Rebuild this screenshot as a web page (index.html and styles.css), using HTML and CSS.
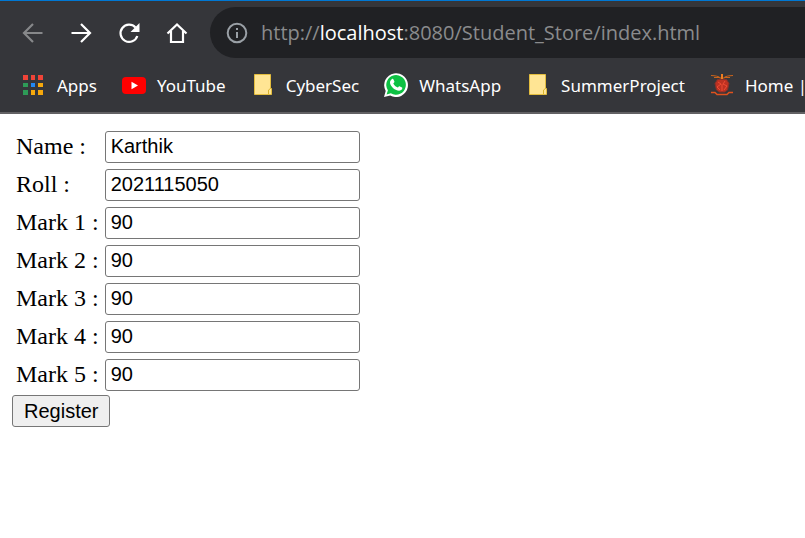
FILE: index.html
```html
<!DOCTYPE html>
<html lang="en">
<head>
<meta charset="utf-8">
<title>Student Store</title>
<link rel="stylesheet" href="styles.css">
</head>
<body>
<header class="browser">
  <div class="toolbar">
    <nav class="controls" aria-label="Navigation">
      <button class="tool dim" type="button" aria-label="Back"><svg viewBox="0 0 24 24"><path d="M21.5 12H4M12 3l-9 9 9 9"/></svg></button>
      <button class="tool" type="button" aria-label="Forward"><svg viewBox="0 0 24 24"><path d="M2.5 12H20M12 3l9 9-9 9"/></svg></button>
      <button class="tool" type="button" aria-label="Reload"><svg viewBox="0 0 24 24"><path d="M18.500 6.500A8.600 8.600 0 1 0 20.300 15"/><path class="solid" d="M22.500 2v9h-9z"/></svg></button>
      <button class="tool" type="button" aria-label="Home"><svg viewBox="0 0 24 24"><path d="M2.500 12.500L12 3.500l9.500 9M6 10v11h12V10"/></svg></button>
    </nav>
    <div class="address">
      <svg class="info" viewBox="0 0 22 22"><circle cx="11" cy="11" r="9.300"/><path d="M11 10v6M11 6v2"/></svg>
      <span class="url">http://<span class="host">localhost</span>:8080/Student_Store/index.html</span>
    </div>
  </div>
  <nav class="bookmarks" aria-label="Bookmarks">
    <a class="bookmark" href="#"><svg viewBox="0 0 24 24"><path fill="#f04438" d="M1 2h5v5H1zM9 2h4v5H9zM16 2h5v5h-5z"/><path fill="#2e9b57" d="M1 10h5v4H1zM1 17h5v5H1z"/><path fill="#2188f3" d="M9 10h4v4H9z"/><path fill="#f5a80c" d="M16 10h5v4h-5zM9 17h4v5H9zM16 17h5v5h-5z"/></svg>Apps</a>
    <a class="bookmark" href="#"><svg viewBox="0 0 24 24"><rect y="4" width="24" height="17" rx="4" fill="#f00"/><path fill="#fff" d="M9.500 8.800l6.500 3.700-6.500 3.700z"/></svg>YouTube</a>
    <a class="bookmark" href="#"><svg viewBox="0 0 24 24"><path fill="#ffe594" stroke="#e3bd3e" d="M3.500 1.500h16v14h1v6h-17z"/><path fill="none" stroke="#d9b32f" d="M17.500 21v-4l2-1.500"/></svg>CyberSec</a>
    <a class="bookmark" href="#"><svg viewBox="0 0 24 24"><path fill="#fff" d="M0 24l1.700-6A11.900 11.900 0 1 1 6.200 22.500z"/><path fill="#0dc143" d="M2.600 21.500l1.300-4.200a9.800 9.800 0 1 1 3 2.900z"/><path fill="#fff" d="M7.700 6.200c.7-.6 1.500-.4 1.800.3l.9 2.100c.2.500-.1 1-1.100 2 1 2 2.300 3.100 4.500 4 .7-.8 1.100-1.600 1.700-1.400l2.500 1.200c.5.300.3 1.500-.2 2.200-1.200 1.500-3.500 1.500-6.100.2-3-1.500-5.700-4.800-5.700-7.400 0-1.400.7-2.300 1.700-3.200z"/></svg>WhatsApp</a>
    <a class="bookmark" href="#"><svg viewBox="0 0 24 24"><path fill="#ffe594" stroke="#e3bd3e" d="M3.500 1.500h16v14h1v6h-17z"/><path fill="none" stroke="#d9b32f" d="M17.500 21v-4l2-1.500"/></svg>SummerProject</a>
    <a class="bookmark" href="#"><svg viewBox="0 0 24 24"><path fill="none" stroke="#c9641c" stroke-width="1.200" d="M1 2.500c3 0 7 0 9 2.500h4c2-2.500 6-2.500 9-2.500M4 4.500h5M15 4.500h5"/><path fill="#ef7d20" d="M11 1h2v5h-2z"/><path fill="#bd3122" stroke="#863128" d="M7.500 6.500h9l2.500 4-1.500 6.500-3 2h-5l-3-2L5 10.500z"/><path fill="none" stroke="#ef4b32" d="M8 9l3 2-4 3 3 3M15 8l-2 3 4 2-3 4M12 11v7"/><path fill="none" stroke="#df511d" stroke-width="1.500" d="M1 19.500h4l2 2h10l2-2h4"/></svg>Home |</a>
  </nav>
</header>
<main>
  <form>
    <table class="fields">
      <tr><td><label for="name">Name :</label></td><td><input id="name" type="text" value="Karthik"></td></tr>
      <tr><td><label for="roll">Roll :</label></td><td><input id="roll" type="text" value="2021115050"></td></tr>
      <tr><td><label for="m1">Mark 1 :</label></td><td><input id="m1" type="text" value="90"></td></tr>
      <tr><td><label for="m2">Mark 2 :</label></td><td><input id="m2" type="text" value="90"></td></tr>
      <tr><td><label for="m3">Mark 3 :</label></td><td><input id="m3" type="text" value="90"></td></tr>
      <tr><td><label for="m4">Mark 4 :</label></td><td><input id="m4" type="text" value="90"></td></tr>
      <tr><td><label for="m5">Mark 5 :</label></td><td><input id="m5" type="text" value="90"></td></tr>
    </table>
    <button class="register" type="button">Register</button>
  </form>
</main>
</body>
</html>
```
FILE: styles.css
```css
* { box-sizing: border-box; }

body {
  margin: 0;
  background: #fff;
  color: #000;
  font-family: "Liberation Serif", "Times New Roman", serif;
  font-size: 24px;
}

.browser {
  overflow: hidden;
  border-top: 1px solid #0078d4;
  border-bottom: 2px solid #626164;
  background: #35363a;
  font-family: "Open Sans", "Segoe UI", sans-serif;
}

.toolbar {
  display: flex;
  align-items: center;
  padding: 6px 0 0 21px;
}

.controls {
  display: flex;
  gap: 24px;
  margin-right: 21px;
}

.tool {
  width: 24px;
  height: 24px;
  padding: 0;
  border: 0;
  background: none;
  color: #fff;
}

.dim { color: #87888a; }

.tool svg {
  display: block;
  width: 24px;
  height: 24px;
  fill: none;
  stroke: currentColor;
  stroke-width: 2.2;
}

.tool .solid {
  fill: currentColor;
  stroke: none;
}

.address {
  display: flex;
  flex: 1;
  align-items: center;
  gap: 13px;
  height: 51px;
  padding-left: 16px;
  border-radius: 26px 0 0 26px;
  background: #202124;
  color: #8a8b8d;
  font-size: 20px;
  white-space: nowrap;
}

.info {
  width: 22px;
  height: 22px;
  fill: none;
  stroke: #9aa0a6;
  stroke-width: 2;
}

.host { color: #fff; }

.bookmarks {
  display: flex;
  align-items: center;
  gap: 25px;
  height: 54px;
  padding-left: 22px;
}

.bookmark {
  display: flex;
  flex: none;
  align-items: center;
  gap: 11px;
  color: #fff;
  font-family: "Noto Sans", "Segoe UI", sans-serif;
  font-size: 17px;
  text-decoration: none;
  white-space: nowrap;
}

.bookmark svg {
  width: 24px;
  height: 24px;
}

main { padding: 12px; }

.fields {
  border-spacing: 3px;
  margin-bottom: -3px;
}

.fields td {
  padding: 2px 1px 1px;
  line-height: 28px;
}

.fields td:first-child {
  padding: 0 2px 1px 1px;
}

.fields input {
  display: block;
  width: 255px;
  height: 32px;
  padding: 1px 5px 3px;
  border: 1px solid #767676;
  border-radius: 3px;
  background: #fff;
  color: #000;
  font: 20px "Liberation Sans", Arial, sans-serif;
}

.register {
  display: block;
  height: 32px;
  margin-top: 3px;
  padding: 0 11px;
  border: 1px solid #767676;
  border-radius: 3px;
  background: #efefef;
  color: #000;
  font: 20px "Liberation Sans", Arial, sans-serif;
}
```
